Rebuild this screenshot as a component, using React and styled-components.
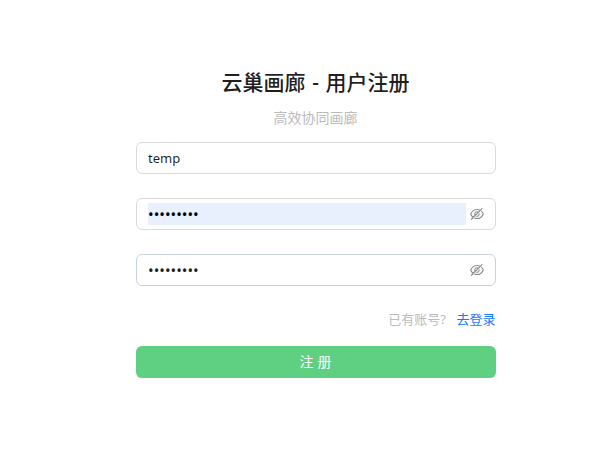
import React from "react";
import styled, { createGlobalStyle } from "styled-components";
import { AiOutlineEyeInvisible } from "react-icons/ai";

const GlobalStyle = createGlobalStyle`
  *, *::before, *::after { box-sizing: border-box; }
  body {
    margin: 0;
    background: #fff;
    font-family: "Noto Sans", "Noto Sans CJK SC", sans-serif;
    font-size: 14px;
    line-height: 22px;
    color: rgba(0, 0, 0, 0.88);
  }
`;

const Page = styled.main`
  width: 360px;
  margin: 0 0 0 136px;
  padding-top: 66px;
`;

const Title = styled.h2`
  margin: 0;
  height: 32px;
  padding-right: 1px;
  font-size: 21px;
  line-height: 33px;
  font-weight: 500;
  word-spacing: 1.2px;
  text-align: center;
  white-space: nowrap;
`;

const Subtitle = styled.div`
  margin: 9px 0 13px;
  padding-right: 1px;
  text-align: center;
  color: #bbb;
`;

const Form = styled.form`
  display: flex;
  flex-direction: column;
`;

const Field = styled.label`
  display: flex;
  align-items: center;
  height: 32px;
  margin-bottom: 24px;
  padding: 4px 11px;
  border: 1px solid ${(p) => (p.$cool ? "#c9d1e0" : "#d9d9d9")};
  border-radius: 6px;
  background: #fff;
`;

const Input = styled.input`
  flex: 1;
  min-width: 0;
  height: 22px;
  padding: 0;
  border: 0;
  outline: 0;
  font: 13px/22px "Noto Sans", "Noto Sans CJK SC", sans-serif;
  color: ${(p) => (p.$filled ? "#000" : "rgba(0, 0, 0, 0.88)")};
  background: ${(p) => (p.$filled ? "#e8f0fe" : "transparent")};

  &[type="password"] {
    font-size: 15px;
    line-height: 21px;
  }
`;

const Toggle = styled.span`
  display: flex;
  margin: 0 -1px 0 3px;
  color: rgba(0, 0, 0, 0.45);
`;

const Hint = styled.div`
  height: 22px;
  margin: -2px 0 16px;
  padding-right: 0.5px;
  font-size: 13px;
  text-align: right;
  color: #bbb;
`;

const Link = styled.a`
  margin-left: 10.5px;
  color: #1677ff;
  text-decoration: none;
`;

const Submit = styled.button`
  height: 32px;
  padding: 0 1px 0 0;
  border: 0;
  border-radius: 6px;
  background: #5fcf82;
  box-shadow: 0 2px 0 rgba(5, 145, 255, 0.1);
  color: #fff;
  font: 14px/22px "Noto Sans", "Noto Sans CJK SC", sans-serif;
  word-spacing: 0.5px;
`;

function PasswordField({ filled, cool }) {
  return (
    <Field $cool={cool}>
      <Input type="password" defaultValue="temp12345" $filled={filled} />
      <Toggle>
        <AiOutlineEyeInvisible size={16} />
      </Toggle>
    </Field>
  );
}

export default function App() {
  return (
    <>
      <GlobalStyle />
      <Page>
        <Title>云巢画廊 - 用户注册</Title>
        <Subtitle>高效协同画廊</Subtitle>
        <Form>
          <Field>
            <Input type="text" defaultValue="temp" />
          </Field>
          <PasswordField filled />
          <PasswordField cool />
          <Hint>
            已有账号?<Link>去登录</Link>
          </Hint>
          <Submit type="button">注 册</Submit>
        </Form>
      </Page>
    </>
  );
}
